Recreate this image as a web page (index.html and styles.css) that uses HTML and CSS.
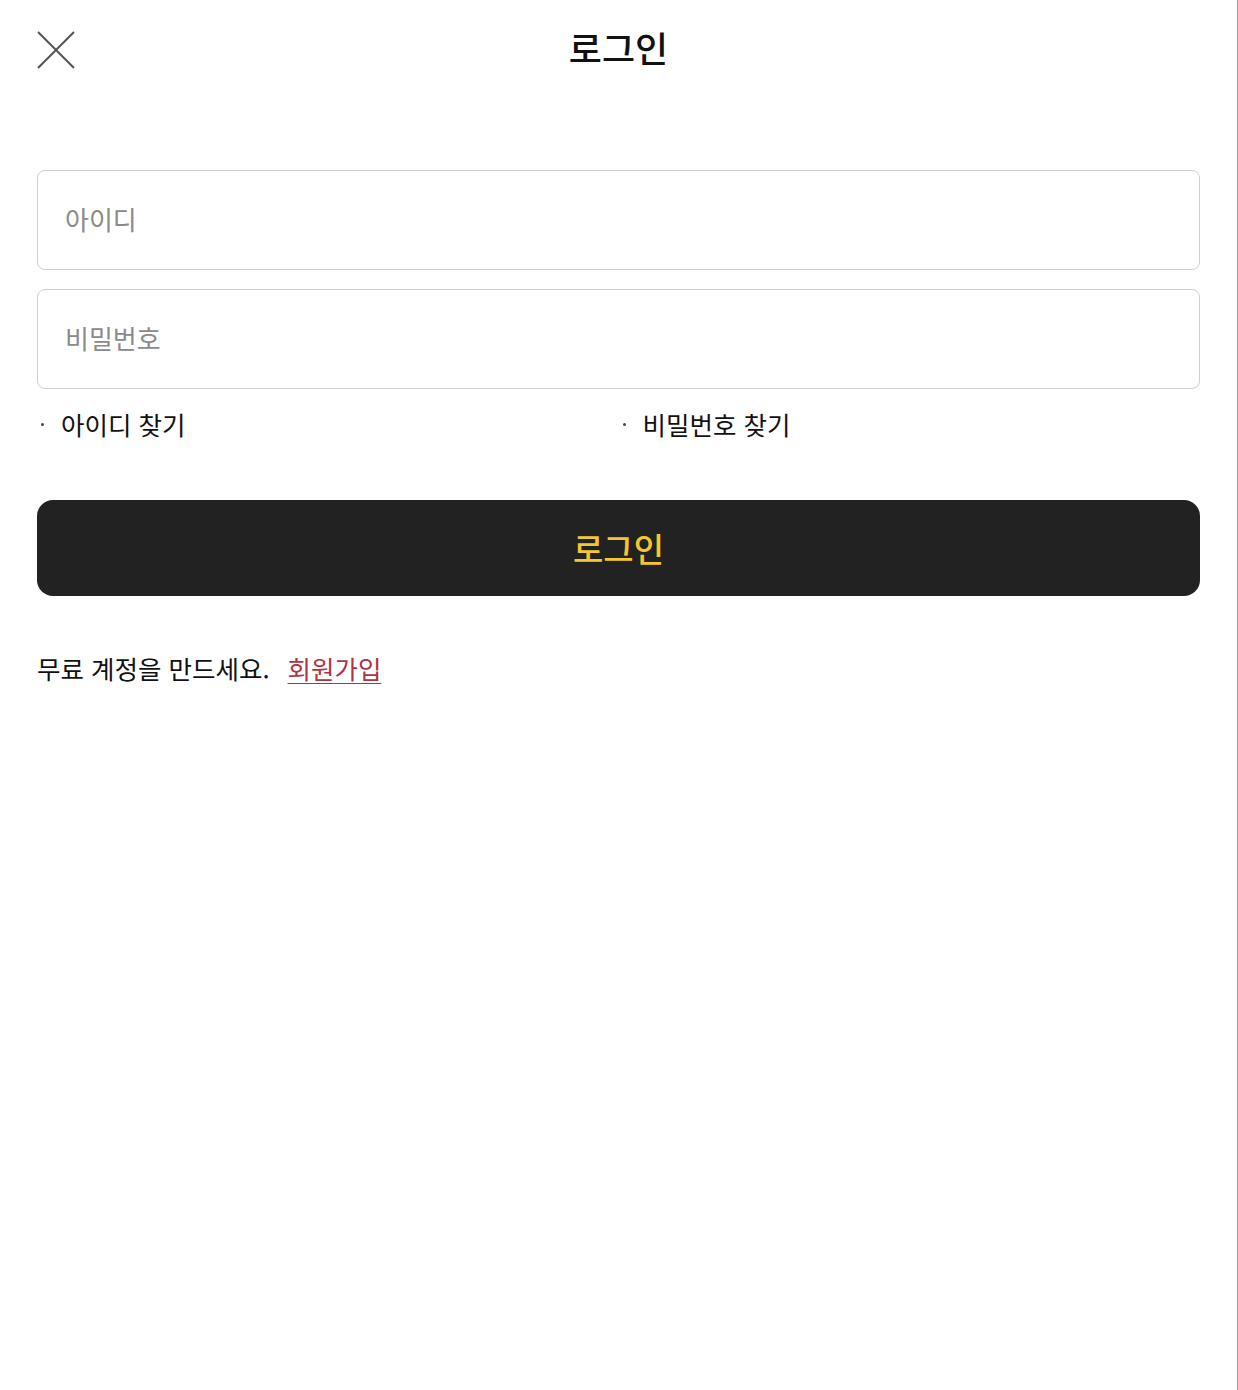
FILE: index.html
```html
<!DOCTYPE html>
<html lang="ko">
<head>
<meta charset="utf-8">
<title>로그인</title>
<link rel="stylesheet" href="styles.css">
</head>
<body>
<div class="page">
  <header class="header">
    <button class="close" type="button" aria-label="닫기">
      <svg width="38" height="38" viewBox="0 0 38 38"><path d="M1 1 L37 37 M37 1 L1 37" stroke="#555" stroke-width="2" fill="none"/></svg>
    </button>
    <h1 class="title">로그인</h1>
    <span></span>
  </header>
  <form class="form">
    <input class="field" type="text" placeholder="아이디">
    <input class="field" type="password" placeholder="비밀번호">
    <div class="finds">
      <a class="find">아이디 찾기</a>
      <a class="find">비밀번호 찾기</a>
    </div>
    <button class="submit" type="button">로그인</button>
  </form>
  <p class="signup">무료 계정을 만드세요.<a class="signup-link">회원가입</a></p>
</div>
</body>
</html>
```
FILE: styles.css
```css
* { box-sizing: border-box; }
html, body { margin: 0; padding: 0; background: #fff; }
body { font-family: "Noto Sans CJK KR", "Noto Sans", sans-serif; color: #111; }
.page {
  min-height: 100vh;
  padding: 0 37px;
  border-right: 1px solid #9a9a9a;
  width: 1238px;
}
.header {
  height: 96px;
  display: grid;
  grid-template-columns: 1fr auto 1fr;
  align-items: center;
}
.close {
  width: 38px; height: 38px; padding: 0; border: 0; background: none;
  display: flex; margin-top: 4px;
}
.title {
  margin: 0;
  font-size: 36px;
  font-weight: 500;
  line-height: 1;
  color: #111;
  margin-top: -3px;
}
.form {
  margin-top: 74px;
  display: flex;
  flex-direction: column;
}
.field {
  height: 100px;
  border: 1px solid #cfcfcf;
  border-radius: 8px;
  padding: 0 27px 3px;
  font-family: inherit;
  font-size: 26px;
  color: #111;
  outline: none;
}
.field + .field { margin-top: 19px; }
.field::placeholder { color: #8a8a8a; }
.finds {
  margin-top: 17px;
  display: grid;
  grid-template-columns: 1fr 1fr;
  height: 36px;
  align-items: center;
}
.find {
  font-size: 25.5px;
  line-height: 36px;
  color: #111;
  position: relative;
  padding-left: 24px;
}
.find::before {
  content: "";
  position: absolute;
  left: 4px;
  top: 17px;
  width: 3px;
  height: 3px;
  border-radius: 50%;
  background: #444;
}
.submit {
  margin-top: 58px;
  height: 96px;
  border: 0;
  border-radius: 16px;
  background: #222;
  color: #f3c82c;
  font-family: inherit;
  font-size: 33px;
  font-weight: 500;
}
.signup {
  margin: 54px 0 0;
  font-size: 25.5px;
  line-height: 36px;
  color: #111;
}
.signup-link {
  margin-left: 18px;
  color: #b3323f;
  text-decoration: underline;
  text-underline-offset: 4px;
  text-decoration-thickness: 1px;
}
```
